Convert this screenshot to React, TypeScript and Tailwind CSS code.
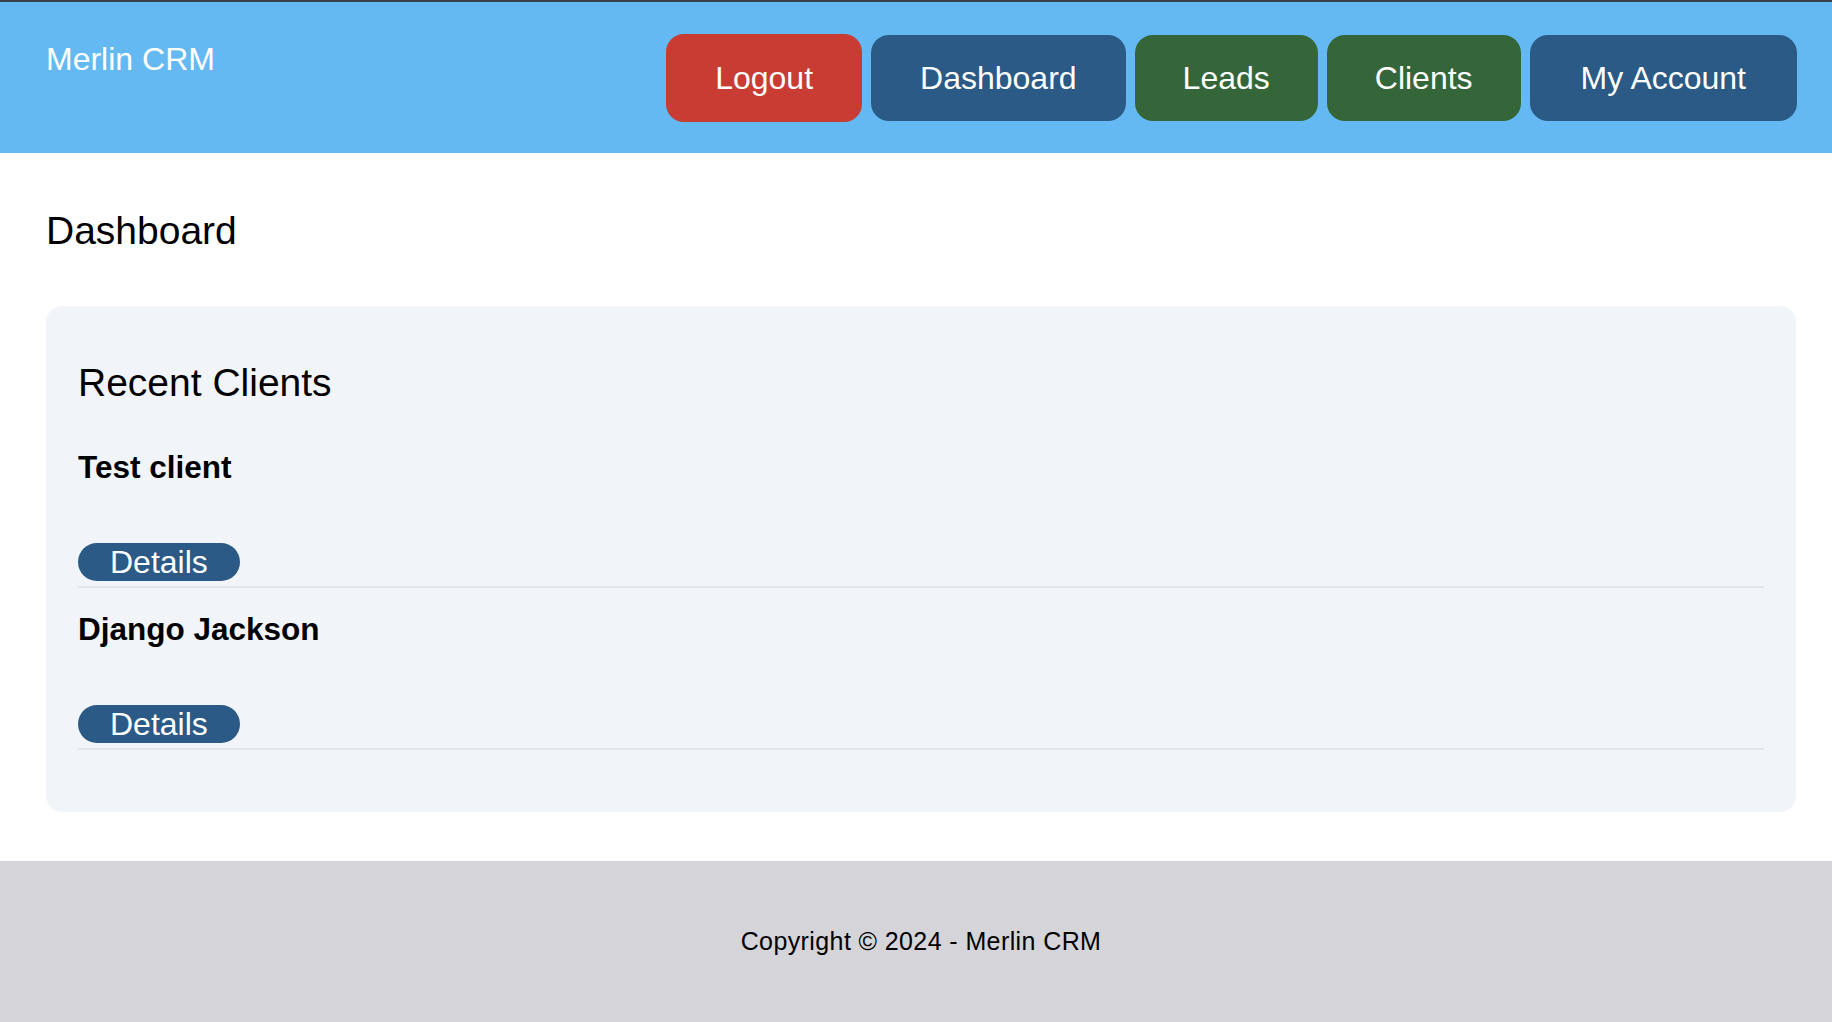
import React from "react";

const clients = ["Test client", "Django Jackson"];

export default function App() {
  return (
    <div className="min-h-screen bg-white text-black font-['Liberation_Sans',Arial,sans-serif]">
      <header className="border-t-2 border-[#3b3f46] bg-[#65b9f2] pl-[46px] pr-[35px] pt-[33px] pb-8 flex items-start justify-between">
        <div className="text-[32px] leading-[48px] text-white">Merlin CRM</div>
        <nav className="flex items-center gap-[9px]">
          <a className="px-[49px] py-[20px] -my-px text-[32px] leading-[48px] text-white rounded-[18px] bg-[#c83c33]">Logout</a>
          <a className="px-[49px] py-[19px] text-[32px] leading-[48px] text-white rounded-[18px] bg-[#2a5a85]">Dashboard</a>
          <a className="px-12 py-[19px] text-[32px] leading-[48px] text-white rounded-[18px] bg-[#346639]">Leads</a>
          <a className="px-12 py-[19px] text-[32px] leading-[48px] text-white rounded-[18px] bg-[#346639]">Clients</a>
          <a className="px-[51px] py-[19px] text-[32px] leading-[48px] text-white rounded-[18px] bg-[#2a5a85]">My Account</a>
        </nav>
      </header>

      <main className="pl-[46px] pr-[36px] pb-[49px]">
        <h1 className="mt-[55px] mb-[51px] text-[39px] leading-[46.8px]">Dashboard</h1>
        <section className="rounded-2xl bg-[#f1f4f9] px-8 pt-[54px] pb-[62px]">
          <h2 className="mb-[19px] text-[39px] leading-[46.8px]">Recent Clients</h2>
          {clients.map((c) => (
            <div key={c} className="pt-[18px]">
              <h3 className="text-[31.5px] font-bold leading-[46px]">{c}</h3>
              <div className="mt-[53px] pb-[5px] border-b-2 border-[#e2e6eb] flex">
                <a className="h-[38px] px-8 text-[32px] leading-[38px] text-white rounded-full bg-[#2a5a85]">Details</a>
              </div>
            </div>
          ))}
        </section>
      </main>

      <footer className="bg-[#d4d4d9] pl-[46px] pr-[36px] py-[62px] text-center text-[25px] leading-[37.5px] tracking-[0.4px]">
        Copyright © 2024 - Merlin CRM
      </footer>
    </div>
  );
}
